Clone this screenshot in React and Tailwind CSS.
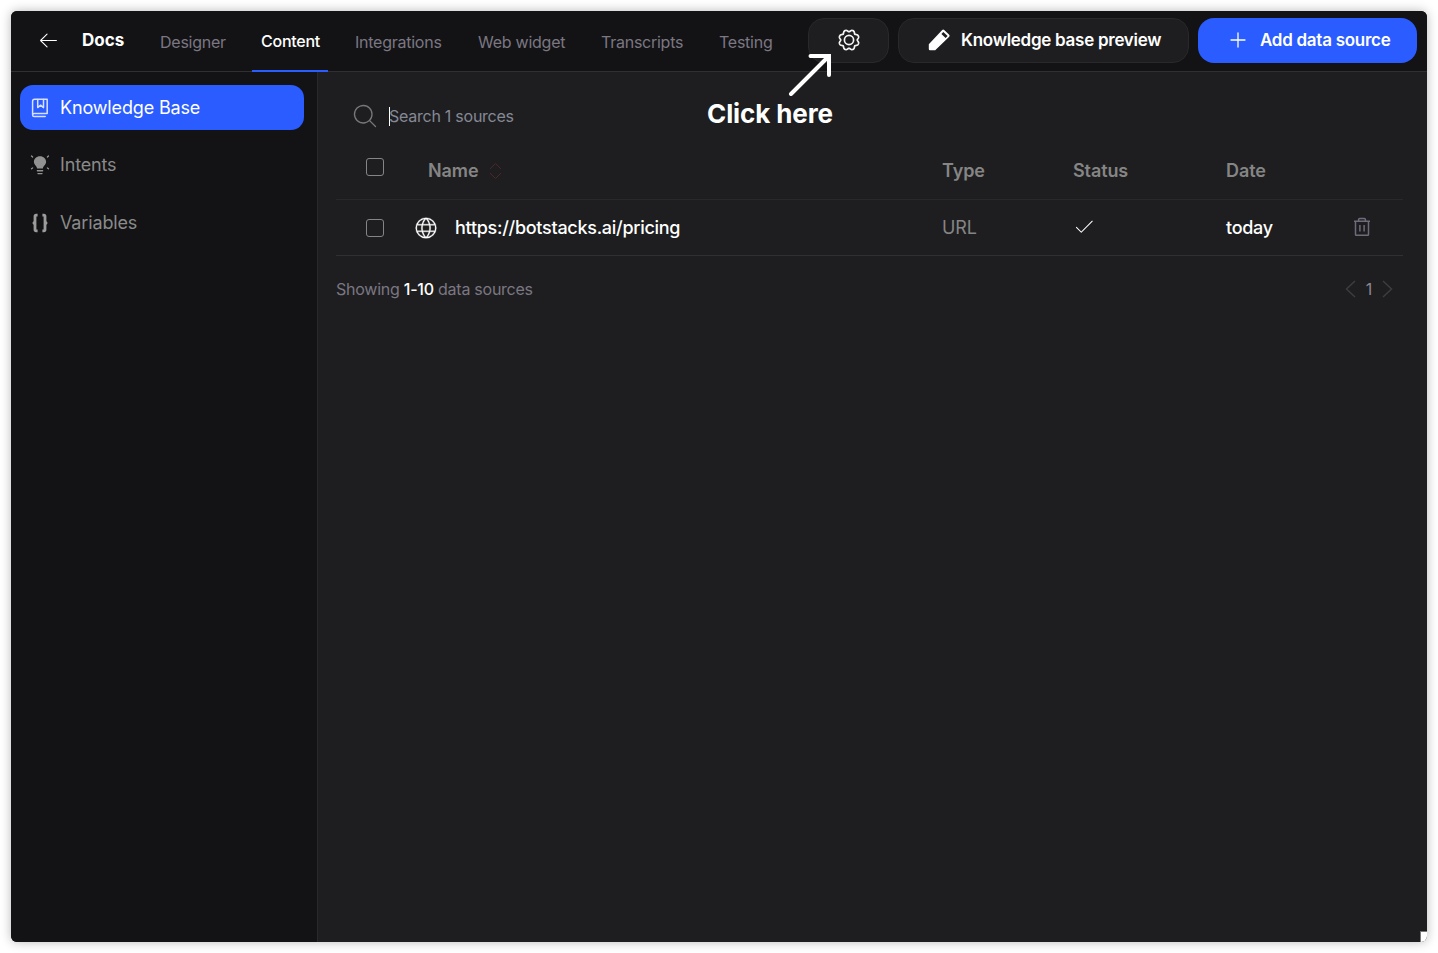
import React from "react";
import { PiMagnifyingGlassLight, PiArrowLeftLight, PiGlobeLight, PiCheckLight } from "react-icons/pi";

const gearPath = (() => {
  let d = "";
  for (let i = 0; i < 160; i++) {
    const a = (i / 160) * Math.PI * 2;
    const r = 9.35 - 0.95 * Math.cos(8 * a) - 0.15 * Math.cos(16 * a);
    d += `${i ? "L" : "M"}${(12 + r * Math.cos(a)).toFixed(2)} ${(12 + r * Math.sin(a)).toFixed(2)}`;
  }
  return d + "Z";
})();

function GearIcon() {
  return (
    <svg width="24" height="24" viewBox="0 0 24 24" fill="none" stroke="#f4f4f4" strokeWidth="1.7" strokeLinejoin="round">
      <path d={gearPath} />
      <circle cx="12" cy="12" r="4.6" />
    </svg>
  );
}

function PencilIcon() {
  return (
    <svg width="24" height="24" viewBox="0 0 24 24" fill="none">
      <path
        fillRule="evenodd"
        d="M1.8 16.2 L15.2 2 Q16.2 1 17.2 2 L22.2 6.8 Q23.1 7.8 22.2 8.8 L8.2 22.2 H3 Q1.8 22.2 1.8 21Z M16.3 4 L14.4 6 L18.6 10.1 L20.6 8.1Z"
        fill="#fff"
      />
    </svg>
  );
}

function BookIcon() {
  return (
    <svg width="18" height="20" viewBox="0 0 18 20" fill="none" stroke="#d8e0ff" strokeWidth="1.5" strokeLinejoin="round" strokeLinecap="round">
      <path d="M1.6 17V3.2Q1.6 1.2 3.6 1.2H16.2V15.6H3.2Q1.6 15.6 1.6 17Q1.6 18.6 3.2 18.6H14.2" />
      <path d="M6.7 1.4V9.6L9.6 7.2L12.5 9.6V1.4" />
    </svg>
  );
}

function BulbIcon() {
  return (
    <svg width="20" height="20" viewBox="0 0 20 20" fill="none" stroke="#929292" strokeWidth="1.4" strokeLinecap="round">
      <path d="M10 1.2C6.4 1.2 3.9 3.7 3.9 6.7C3.9 9.6 6.8 10.8 7.1 13.4H12.9C13.2 10.8 16.1 9.6 16.1 6.7C16.1 3.7 13.6 1.2 10 1.2Z" fill="#929292" stroke="none" />
      <path d="M7.4 15.7H12.6M8 18.6H12" />
      <path d="M1.5 1L2.6 2M18.5 1L17.4 2M1.5 13.8L2.6 13M18.5 13.8L17.4 13" strokeWidth="1.3" />
    </svg>
  );
}

function BracesIcon() {
  return (
    <svg width="18" height="20" viewBox="0 0 18 20" fill="none" stroke="#9c9c9c" strokeWidth="2.8">
      <path d="M6.6 2.2H5.1Q4 2.2 4 3.5V16.5Q4 17.8 5.1 17.8H6.6" />
      <path d="M11.4 2.2H12.9Q14 2.2 14 3.5V16.5Q14 17.8 12.9 17.8H11.4" />
      <path d="M3.4 7.6L1.2 10L3.4 12.4ZM14.6 7.6L16.8 10L14.6 12.4Z" fill="#9c9c9c" stroke="none" />
    </svg>
  );
}

function TrashIcon() {
  return (
    <svg width="18" height="20" viewBox="0 0 18 20" fill="none" stroke="#6f6b7a" strokeWidth="1.5" strokeLinejoin="round">
      <path d="M1 4.2H17M2.5 4.2V17.5Q2.5 18.3 3.3 18.3H14.7Q15.5 18.3 15.5 17.5V4.2" />
      <path d="M5.6 4V2.6Q5.6 1.5 6.7 1.5H11.3Q12.4 1.5 12.4 2.6V4" />
      <path d="M6.9 8V14.6M11.1 8V14.6" />
    </svg>
  );
}

const tabs = [
  { label: "Designer", width: "w-[83px]" },
  { label: "Content", width: "w-[76px]", active: true },
  { label: "Integrations", width: "w-[105px]" },
  { label: "Web widget", width: "w-[105px]" },
  { label: "Transcripts", width: "w-[100px]" },
  { label: "Testing", width: "w-[72px]" },
];

const navItems = [
  { label: "Knowledge Base", icon: <BookIcon />, active: true },
  { label: "Intents", icon: <BulbIcon /> },
  { label: "Variables", icon: <BracesIcon /> },
];

function Checkbox() {
  return <span className="block size-[18px] rounded-[3px] border border-[#858585]" />;
}

const rowGrid = "grid grid-cols-[80px_526px_131px_153px_118px_1fr] border-b";

export default function App() {
  return (
    <div className="h-[953px] w-[1438px] overflow-hidden bg-white p-[11px] font-['Inter',sans-serif]">
      <div className="relative flex h-[931px] w-[1416px] flex-col overflow-hidden rounded-[6px] bg-[#1e1e20] shadow-[0_0_11px_rgba(0,0,0,0.28)]">
        <header className="flex h-[61px] shrink-0 border-b border-[#303032] bg-[#131315]">
          <div className="flex h-[59px] items-center">
            <PiArrowLeftLight className="ml-[26px] size-[23px] text-white" />
            <span className="ml-[22px] w-[52px] text-[17px] font-bold text-white">Docs</span>
          </div>
          <nav className="ml-[17px] flex h-[61px] gap-[18px]">
            {tabs.map((t) => (
              <a
                key={t.label}
                className={`${t.width} ${t.active ? "border-b-[2.5px] border-[#2a5cff] pt-[18px] font-[450] text-white" : "pt-[19px] font-[430] text-[#7b7783]"} whitespace-nowrap px-[9px] text-[16px] leading-6 tracking-[-0.25px]`}
              >
                {t.label}
              </a>
            ))}
          </nav>
          <div className="ml-[26px] mt-[7px] flex gap-[9px] text-[17px] font-semibold tracking-[-0.27px] text-white">
            <button className="flex h-[45px] w-[81px] items-center justify-center rounded-[16px] border border-[#29292b] bg-[#1e1e20] pb-[1px]">
              <GearIcon />
            </button>
            <button className="flex h-[45px] w-[291px] items-center whitespace-nowrap rounded-[16px] border border-[#29292b] bg-[#1e1e20] pl-[28px]">
              <span className="pb-[2px]"><PencilIcon /></span>
              <span className="ml-[10px]">Knowledge base preview</span>
            </button>
            <button className="flex h-[45px] w-[219px] items-center whitespace-nowrap rounded-[16px] bg-[#2a5cff] pl-[32px]">
              <svg className="mb-[1px]" width="16" height="16" viewBox="0 0 16 16" stroke="#fff" strokeWidth="1.3" strokeLinecap="round">
                <path d="M8 1V15M1 8H15" />
              </svg>
              <span className="ml-[14px]">Add data source</span>
            </button>
          </div>
        </header>

        <div className="flex min-h-0 flex-1">
          <aside className="flex w-[307px] shrink-0 flex-col gap-[13px] border-r border-[#29292b] bg-[#131315] pl-[9px] pt-[13px]">
            {navItems.map((n) => (
              <a
                key={n.label}
                className={`flex h-[45px] w-[284px] items-center rounded-[13px] text-[18px] font-[430] tracking-[-0.15px] ${n.active ? "bg-[#2a5cff] text-white" : "pb-[2px] text-[#8a8a8a]"}`}
              >
                <span className="ml-[10px] flex w-5 justify-center">{n.icon}</span>
                <span className="ml-[10px]">{n.label}</span>
              </a>
            ))}
          </aside>

          <main className="flex w-[1085px] flex-col pl-[18px] pt-[31px]">
            <div className="flex h-[26px] items-center">
              <PiMagnifyingGlassLight className="ml-[15px] size-[28px] text-[#777]" />
              <span className="ml-[10px] h-[19px] w-px bg-white" />
              <span className="-ml-px text-[16px] font-[430] tracking-[-0.25px] text-[#858995]">Search 1 sources</span>
            </div>

            <div className="mt-[13px]">
              <div className={`${rowGrid} h-[58px] border-[#29292b] pt-[12px] text-[18px] font-semibold leading-[34px] tracking-[-0.1px] text-[#858585]`}>
                <span className="pl-[30px] pt-[4px]"><Checkbox /></span>
                <span className="flex h-[34px] items-center pl-[12px]">
                  Name
                  <svg className="ml-[11px]" width="13" height="18" viewBox="0 0 13 18" fill="none" stroke="#4c2723" strokeWidth="1">
                    <path d="M1 7L6.5 1.5L12 7M1 11L6.5 16.5L12 11" />
                  </svg>
                </span>
                <span>Type</span>
                <span>Status</span>
                <span>Date</span>
              </div>
              <div className={`${rowGrid} h-[56px] items-center border-[#303032] text-[18px] font-medium tracking-[-0.28px] text-white`}>
                <span className="pl-[30px]"><Checkbox /></span>
                <span className="flex items-center">
                  <PiGlobeLight className="-ml-[3px] size-[26px]" stroke="currentColor" strokeWidth="3" />
                  <span className="ml-[16px]">https://botstacks.ai/pricing</span>
                </span>
                <span className="font-[430] tracking-[-0.1px] text-[#858585]">URL</span>
                <PiCheckLight className="mb-[3px] size-[22px]" />
                <span>today</span>
                <span className="pb-[2px] pl-[9px]"><TrashIcon /></span>
              </div>
            </div>

            <div className="mt-[20px] flex h-[26px] w-[1067px] items-center text-[16px] font-[430] tracking-[-0.25px] text-[#7b7783]">
              <span className="pb-px">
                Showing <span className="font-medium text-white">1-10</span> data sources
              </span>
              <div className="ml-auto mr-[10px] flex items-center">
                <svg width="11" height="18" viewBox="0 0 11 18" fill="none" stroke="#3d3d40" strokeWidth="1.5">
                  <path d="M10 1L1.5 9L10 17" />
                </svg>
                <span className="w-[26px] text-center text-[#8b8792]">1</span>
                <svg width="11" height="18" viewBox="0 0 11 18" fill="none" stroke="#3d3d40" strokeWidth="1.5">
                  <path d="M1 1L9.5 9L1 17" />
                </svg>
              </div>
            </div>
          </main>
        </div>

        <div className="absolute left-[696px] top-[41px] text-white">
          <svg className="ml-[81px]" width="46" height="44" viewBox="0 0 46 44" fill="none" stroke="#fff" strokeWidth="4">
            <path d="M3 42L40 5M22.5 4H41V23" strokeLinejoin="miter" strokeLinecap="round" />
          </svg>
          <div className="mt-px whitespace-nowrap text-[26px] font-bold leading-[34px] tracking-[-0.1px]">Click here</div>
        </div>
        <div className="absolute bottom-0 right-0 h-[11px] w-[7px] border-l border-t border-[#777] bg-white" />
      </div>
    </div>
  );
}
